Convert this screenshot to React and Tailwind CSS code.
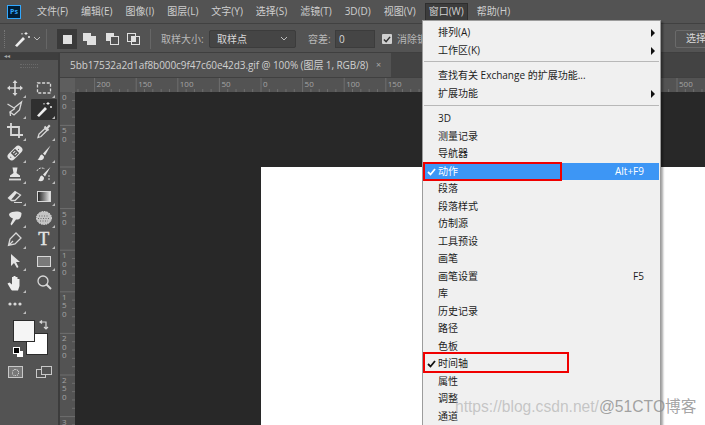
import React from "react";

const fontStack = "font-['Open_Sans','Noto_Sans_CJK_SC',sans-serif]";

const menuBarItems = ["文件(F)", "编辑(E)", "图像(I)", "图层(L)", "文字(Y)", "选择(S)", "滤镜(T)", "3D(D)", "视图(V)", "窗口(W)", "帮助(H)"];

const windowMenu = [
  { label: "3D" },
  { label: "测量记录" },
  { label: "导航器" },
  { label: "动作", shortcut: "Alt+F9", checked: true, active: true },
  { label: "段落" },
  { label: "段落样式" },
  { label: "仿制源" },
  { label: "工具预设" },
  { label: "画笔" },
  { label: "画笔设置", shortcut: "F5" },
  { label: "库" },
  { label: "历史记录" },
  { label: "路径" },
  { label: "色板" },
  { label: "时间轴", checked: true },
  { label: "属性" },
  { label: "调整" },
  { label: "通道" },
];

const Corner = () => (
  <span className="absolute right-[3px] bottom-[1px] w-0 h-0 border-l-[3px] border-l-transparent border-b-[3px] border-b-[#bcbcbc]" />
);

const Glyph = ({ children, corner = true }) => (
  <div className="relative w-[28px] h-[21.67px] flex items-center justify-center">
    <svg width="18" height="18" viewBox="0 0 18 18" fill="none" stroke="#d8d8d8" strokeWidth="1.3">
      {children}
    </svg>
    {corner && <Corner />}
  </div>
);

const WandPaths = () => (
  <>
    <path d="M2 15.5 L10 7 L12 9 L4 17 Z" fill="#eeeeee" stroke="none" />
    <path d="M13 2 V5 M11.5 3.5 H14.5 M16 6 V8 M15 7 H17 M9 3 V4.5" stroke="#eeeeee" strokeWidth="1" />
  </>
);

const toolIcons = [
  <Glyph key="move">
    <path d="M9 3 V15 M3 9 H15" strokeWidth="1.6" />
    <path d="M9 1 L11.5 4 H6.5 Z M9 17 L11.5 14 H6.5 Z M1 9 L4 6.5 V11.5 Z M17 9 L14 6.5 V11.5 Z" fill="#d8d8d8" stroke="none" />
  </Glyph>,
  <Glyph key="marquee"><rect x="2.5" y="4" width="13" height="10" strokeDasharray="3 1.6" /></Glyph>,
  <Glyph key="lasso"><path d="M1.5 4 L8 8 L15.5 2 L13.5 10 L8 15 L4 12 L9 8.5 M4 12 L4.5 16" /></Glyph>,
  <div key="wand" className="relative w-[26px] h-[21.67px] flex items-center justify-center bg-[#2f2f2f] rounded-[1px]">
    <svg width="18" height="18" viewBox="0 0 18 18" fill="none"><WandPaths /></svg>
    <span className="absolute right-[2px] bottom-[1px] w-0 h-0 border-l-[3px] border-l-transparent border-b-[3px] border-b-[#bcbcbc]" />
  </div>,
  <Glyph key="crop"><path d="M1 5 H13 V16 M5 1 V13 H17" strokeWidth="1.8" /></Glyph>,
  <Glyph key="dropper">
    <path d="M3 15.5 L4 12 L10 6.5 L12 8.5 L6 14.5 Z" />
    <path d="M9.5 4.5 L13.5 8.5" strokeWidth="2" />
    <path d="M11 6 L14 2.5 L15.5 4 L12.5 7.5 Z" fill="#d8d8d8" stroke="none" />
  </Glyph>,
  <Glyph key="heal">
    <g transform="rotate(-45 9 9)">
      <rect x="0.5" y="5" width="17" height="8" rx="3.5" fill="#e4e4e4" stroke="none" />
      <rect x="6" y="6" width="6" height="6" fill="#535353" stroke="none" />
      <path d="M7.5 7.8 H10.5 M7.5 10.2 H10.5" stroke="#e4e4e4" strokeWidth="1" />
      <path d="M2.5 9 H4.5 M13.5 9 H15.5" stroke="#535353" strokeWidth="1" strokeDasharray="1 1" />
    </g>
  </Glyph>,
  <Glyph key="brush">
    <path d="M15.5 1.5 L8 9.5 L10 11.5 Z" fill="#e4e4e4" stroke="none" />
    <path d="M7 10.5 C4.5 10.5 5 14.5 2.5 15.5 C5.5 17 9.5 16 9 12.5 Z" fill="#e4e4e4" stroke="none" />
  </Glyph>,
  <Glyph key="stamp">
    <path d="M6.5 2.5 H11.5 L10.5 8 L14 10.5 V12 H4 V10.5 L7.5 8 Z" fill="#e4e4e4" stroke="none" />
    <path d="M3 14.5 H15" strokeWidth="1.8" />
  </Glyph>,
  <Glyph key="history">
    <path d="M15.5 2 L8 9.5 L10 11.5 Z" fill="#e4e4e4" stroke="none" />
    <path d="M7 10.5 C4.5 10.5 5 14.5 3 15.5 C6 17 9.5 16 9 12.5 Z" fill="#e4e4e4" stroke="none" />
    <path d="M2 6 C3 3 7 2 10 4 M14 10 V15" strokeWidth="1" strokeDasharray="2 1" />
  </Glyph>,
  <Glyph key="eraser">
    <path d="M2.5 11 L9 4.5 L14.5 8 L9 13.5 H5.5 Z" />
    <path d="M2.5 11 L9 4.5 L11 5.8 L5 13 Z" fill="#e4e4e4" stroke="none" />
    <path d="M8 15.5 H16" strokeWidth="1" />
  </Glyph>,
  <div key="gradient" className="relative w-[28px] h-[21.67px] flex items-center justify-center">
    <div className="w-[14px] h-[11px] border border-[#d8d8d8] bg-gradient-to-r from-[#2a2a2a] to-[#e8e8e8]" />
    <Corner />
  </div>,
  <Glyph key="smudge">
    <path d="M3 5 C6 2 13 2 15.5 4 C15.5 9 13 11 10 10.5 L5.5 16.5 L4.5 15 L7 9.5 C4.5 9 3 7 3 5 Z" fill="#e4e4e4" stroke="none" />
  </Glyph>,
  <Glyph key="sponge">
    <ellipse cx="9" cy="9" rx="7.5" ry="6.5" fill="#c4c4c4" stroke="#e4e4e4" strokeDasharray="1.5 1" strokeWidth="1" />
    <path d="M4 7 H14 M3 9.5 H15 M5 12 H13" stroke="#6a6a6a" strokeDasharray="1 1.5" strokeWidth="1" />
  </Glyph>,
  <Glyph key="pen"><path d="M2.5 15.5 L4 9 L10 3 L15 8 L9 14 Z M2.5 15.5 L7 11" /></Glyph>,
  <div key="type" className="relative w-[28px] h-[21.67px] flex items-center justify-center">
    <span className="font-['Liberation_Serif',serif] text-[18px] leading-none text-[#e4e4e4] [-webkit-text-stroke:0.4px_#e4e4e4]">T</span>
    <Corner />
  </div>,
  <Glyph key="select"><path d="M5 2 V14 L8 11 L11 16 L12.5 15 L10 10 L14 10 Z" fill="#e4e4e4" stroke="none" /></Glyph>,
  <div key="shape" className="relative w-[28px] h-[21.67px] flex items-center justify-center">
    <div className="w-[14px] h-[11px] border border-[#d8d8d8] bg-[#7a7a7a]" />
    <Corner />
  </div>,
  <Glyph key="hand"><path d="M5 15.5 L1.5 9.5 L3.5 8.5 L6 10.5 V3 H7.5 V8 V2 H9.5 V8 V3 H11.5 V9 V5 H13.5 V12 L12 16.5 H6 Z" fill="#eeeeee" stroke="none" /></Glyph>,
  <Glyph key="zoom" corner={false}><circle cx="8" cy="7" r="5" /><path d="M11.5 10.5 L16 15" strokeWidth="2" /></Glyph>,
];

const HorizontalRuler = () => {
  const labels = ["250", "200", "150", "100", "50", "0", "50", "100", "150", "200", "250", "300", "350", "400", "450", "500", "550"];
  return (
    <svg width="630" height="14" className="block">
      {labels.map((label, i) => {
        const x = 186 + (i - 5) * 41.6;
        // labels under the open menu are never seen
        const hidden = x + 75 > 405 && x + 75 < 655;
        return (
          <g key={i}>
            <path d={`M${x} 0 V14`} stroke="#6e6e6e" />
            {[1, 2, 3, 4].map((k) => (
              <path key={k} d={`M${x + k * 8.32} 11 V14`} stroke="#6e6e6e" />
            ))}
            {x > 0 && !hidden && <text x={x + 2} y="9" fontSize="8" fill="#a4a4a4">{label}</text>}
          </g>
        );
      })}
    </svg>
  );
};

const VerticalRuler = () => {
  const labels = ["100", "50", "0", "50", "100", "150", "200", "250", "300"];
  return (
    <svg width="15" height="333" className="block">
      {labels.map((label, i) => {
        const y = (i - 2) * 41.6 + 75;
        return (
          <g key={i}>
            <path d={`M0 ${y} H15`} stroke="#6e6e6e" />
            {[1, 2, 3, 4].map((k) => (
              <path key={k} d={`M12 ${y + k * 8.32} H15`} stroke="#6e6e6e" />
            ))}
            {label.split("").map((c, j) => {
              const ty = y + 8 + j * 8.4;
              if (ty < 7 || ty > 333) return null;
              return <text key={j} x="2" y={ty} fontSize="8" fill="#a4a4a4">{c}</text>;
            })}
          </g>
        );
      })}
    </svg>
  );
};

const MenuRow = ({ label, shortcut, arrow, checked, active }) => (
  <div className={`relative flex items-center h-[17.5px] mx-[1px] pl-[14px] pr-[15px] ${active ? "bg-[#3d96f5] text-white" : ""}`}>
    {checked && (
      <svg width="9" height="8" viewBox="0 0 9 8" className="absolute left-[3px] top-[5px]" fill="none" stroke={active ? "#ffffff" : "#111111"} strokeWidth="1.8">
        <path d="M1 4 L3.5 6.5 L8 1" />
      </svg>
    )}
    <span className="flex-1 whitespace-nowrap">{label}</span>
    {shortcut && <span>{shortcut}</span>}
    {arrow && <span className="absolute right-[4px] top-[5px] w-0 h-0 border-y-[4px] border-y-transparent border-l-[4px] border-l-[#111111]" />}
  </div>
);

const WindowMenu = () => (
  <div className="absolute left-[422px] top-[20px] w-[239px] h-[420px] bg-[#f0f0f0] border border-[#9c9c9c] shadow-[2px_2px_2px_rgba(0,0,0,0.35)] text-[#1c1c1c] text-[10px] pt-[3px]">
    <MenuRow label="排列(A)" arrow />
    <MenuRow label="工作区(K)" arrow />
    <div className="h-px bg-[#b8b8b8] mx-[1px] mt-[2px] mb-[5px]" />
    <MenuRow label="查找有关 Exchange 的扩展功能..." />
    <MenuRow label="扩展功能" arrow />
    <div className="h-px bg-[#b8b8b8] mx-[1px] mt-[3px] mb-[4px]" />
    {windowMenu.map((item) => (
      <MenuRow key={item.label} {...item} />
    ))}
    <div className="absolute left-[0px] top-[141px] w-[139px] h-[19px] border-2 border-[#f00000]" />
    <div className="absolute left-[0px] top-[331px] w-[146px] h-[21px] border-2 border-[#f00000]" />
  </div>
);

const App = () => {
  return (
    <div className={`relative w-[705px] h-[425px] overflow-hidden bg-[#535353] flex flex-col text-[#cfcfcf] text-[10px] ${fontStack}`}>
      {/* menu bar */}
      <div className="h-[24px] shrink-0 flex items-center border-b border-[#414141] pl-[7px]">
        <div className="w-[14px] h-[14px] border border-[#31a8ff] bg-[#001e36] text-[#31a8ff] text-[7px] leading-[12px] text-center font-bold">Ps</div>
        <div className="flex ml-[13px]">
          {menuBarItems.map((m) => (
            <span key={m} className={`whitespace-nowrap h-[16px] leading-[15px] px-[3px] mr-[7px] ${m === "窗口(W)" ? "bg-[#3c3c3c] outline outline-[#2e2e2e]" : ""}`}>{m}</span>
          ))}
        </div>
      </div>

      {/* options bar */}
      <div className="h-[29px] shrink-0 flex items-center border-b border-[#3f3f3f] pl-[4px] pt-[2px] relative">
        <span className="w-[2px] h-[18px] border-l border-dotted border-[#777777] mr-[7px]" />
        <svg width="18" height="18" viewBox="0 0 18 18" fill="none"><WandPaths /></svg>
        <svg width="8" height="6" viewBox="0 0 8 6" className="ml-[2px]" fill="none" stroke="#bdbdbd"><path d="M1 1 L4 4 L7 1" /></svg>
        <span className="w-px h-[20px] bg-[#666666] ml-[5px] mr-[10px]" />
        <div className="w-[20px] h-[20px] bg-[#3a3a3a] flex items-center justify-center mr-[4px]"><span className="w-[9px] h-[9px] bg-[#e0e0e0]" /></div>
        <svg width="18" height="14" className="mr-[6px]"><rect x="2" y="1" width="8" height="8" fill="#e0e0e0" /><rect x="6" y="4" width="9" height="9" fill="#e0e0e0" /></svg>
        <svg width="16" height="14" className="mr-[5px]" fill="none" stroke="#e0e0e0"><rect x="1.5" y="1.5" width="7" height="7" fill="#e0e0e0" /><rect x="5.5" y="4.5" width="8" height="8" fill="#535353" /></svg>
        <svg width="16" height="14" className="mr-[8px]" fill="none" stroke="#e0e0e0"><rect x="1.5" y="1.5" width="8" height="8" /><rect x="5.5" y="4.5" width="8" height="8" /><rect x="5.5" y="4.5" width="4" height="5" fill="#e0e0e0" /></svg>
        <span className="w-px h-[20px] bg-[#666666] mr-[10px]" />
        <span className="text-[#b8b8b8] whitespace-nowrap w-[48px]">取样大小:</span>
        <div className="w-[87px] h-[18px] bg-[#454545] border border-[#3c3c3c] rounded-[2px] flex items-center justify-between px-[7px] text-[#d8d8d8]">
          <span>取样点</span>
          <svg width="8" height="6" viewBox="0 0 8 6" fill="none" stroke="#bdbdbd"><path d="M1 1 L4 4 L7 1" /></svg>
        </div>
        <span className="text-[#b8b8b8] whitespace-nowrap ml-[12px] w-[27px]">容差:</span>
        <div className="w-[40px] h-[18px] bg-[#454545] border border-[#3c3c3c] px-[3px] leading-[16px] text-[#d8d8d8]">0</div>
        <div className="w-[10px] h-[10px] ml-[7px] mr-[5px] bg-[#d0d0d0] rounded-[1px] flex items-center justify-center">
          <svg width="8" height="7" viewBox="0 0 9 8" fill="none" stroke="#333333" strokeWidth="1.8"><path d="M1 4 L3.5 6.5 L8 1" /></svg>
        </div>
        <span className="text-[#b8b8b8] whitespace-nowrap w-[25px] overflow-hidden">消除锯</span>
        <div className="absolute left-[675px] top-[6px] w-[40px] h-[18px] border border-[#6a6a6a] rounded-[2px] pl-[10px] leading-[15px] text-[#d8d8d8] whitespace-nowrap overflow-hidden">选择</div>
      </div>

      <div className="flex flex-1 min-h-0">
        {/* left toolbar */}
        <div className="w-[58px] shrink-0 flex flex-col">
          <div className="h-[7px] bg-[#3e3e3e] text-[6px] leading-[6px] pl-[4px] text-[#aaaaaa]">◂◂</div>
          <div className="h-[4px] mx-[20px] mt-[4px] border-y border-dotted border-[#6a6a6a]" />
          <div className="grid grid-cols-2 mt-[9px] pl-[1px] justify-items-center">
            {toolIcons}
          </div>
          <div className="ml-[1px]">
            <Glyph>
              <circle cx="4" cy="9" r="1.6" fill="#d8d8d8" stroke="none" />
              <circle cx="9" cy="9" r="1.6" fill="#d8d8d8" stroke="none" />
              <circle cx="14" cy="9" r="1.6" fill="#d8d8d8" stroke="none" />
            </Glyph>
          </div>
          {/* colour swatches */}
          <div className="relative h-[37px] mt-[5px]">
            <div className="absolute left-[26px] top-[13px] w-[22px] h-[22px] bg-white border border-[#2c2c2c]" />
            <div className="absolute left-[13px] top-0 w-[22px] h-[22px] bg-[#f5f5f5] border border-[#2c2c2c]" />
            <svg width="10" height="10" viewBox="0 0 10 10" className="absolute left-[39px] top-0" fill="none" stroke="#d8d8d8" strokeWidth="1.2">
              <path d="M1 2 H7 V9 M5 7 L7 9 L9 7 M3 0.5 L1 2 L3 3.5" />
            </svg>
            <span className="absolute left-[17px] top-[31px] w-[6px] h-[6px] bg-white" />
            <span className="absolute left-[13px] top-[27px] w-[7px] h-[7px] bg-black border border-white" />
          </div>
          <div className="flex items-center gap-[13px] pl-[8px] mt-[9px]">
            <div className="w-[15px] h-[12px] bg-[#777777] border border-[#c8c8c8] flex items-center justify-center">
              <span className="w-[7px] h-[7px] rounded-full border border-dotted border-[#e8e8e8]" />
            </div>
            <svg width="16" height="12" fill="none" stroke="#c8c8c8"><rect x="0.5" y="3.5" width="9" height="8" /><rect x="5.5" y="0.5" width="10" height="8" fill="#535353" /></svg>
          </div>
        </div>

        <div className="w-[2px] shrink-0 bg-[#3c3c3c]" />

        {/* document area */}
        <div className="flex-1 flex flex-col min-w-0">
          <div className="h-[24px] shrink-0 flex bg-[#434343]">
            <div className="w-[331px] bg-[#535353] flex items-center pl-[10px] whitespace-nowrap text-[#d0d0d0]">
              <span className="w-[300px] shrink-0 tracking-[-0.08px]">5bb17532a2d1af8b000c9f47c60e42d3.gif @ 100% (图层 1, RGB/8)</span>
              <span className="ml-[6px] text-[#a8a8a8] text-[9px]">×</span>
            </div>
          </div>
          <div className="h-[15px] shrink-0 flex border-t border-[#404040]">
            <div className="w-[15px] shrink-0 bg-[#5e5e5e]" />
            <HorizontalRuler />
          </div>
          <div className="flex flex-1 min-h-0">
            <div className="w-[15px] shrink-0"><VerticalRuler /></div>
            <div className="flex-1 bg-[#282828] pl-[186px] pt-[75px]">
              <div className="w-full h-full bg-white" />
            </div>
          </div>
        </div>
      </div>

      <WindowMenu />

      {/* watermark */}
      <div className="absolute left-[455px] top-[398px] flex items-baseline whitespace-nowrap font-['Liberation_Sans','Noto_Sans_CJK_SC',sans-serif]">
        <span className="text-[15.6px] leading-[18px] text-[#a8a8a8]/60">https://blog.csdn.net/</span>
        <span className="text-[15.7px] leading-[18px] text-[#8c8c8c]/80">@51CTO博客</span>
      </div>
    </div>
  );
};

export default App;
